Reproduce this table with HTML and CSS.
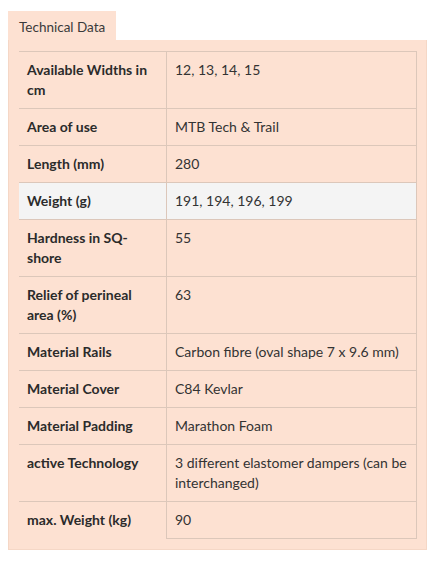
FILE: index.html
```html
<!DOCTYPE html>
<html>
<head>
<meta charset="utf-8">
<link rel="stylesheet" href="styles.css">
</head>
<body>
<div class="wrap">
  <div class="tabs"><div class="tab">Technical Data</div></div>
  <div class="panel">
    <table class="spec">
      <tr><th>Available Widths in cm</th><td>12, 13, 14, 15</td></tr>
      <tr><th>Area of use</th><td>MTB Tech &amp; Trail</td></tr>
      <tr><th>Length (mm)</th><td>280</td></tr>
      <tr class="hl"><th>Weight (g)</th><td>191, 194, 196, 199</td></tr>
      <tr><th>Hardness in SQ-shore</th><td>55</td></tr>
      <tr><th>Relief of perineal area (%)</th><td>63</td></tr>
      <tr><th>Material Rails</th><td>Carbon fibre (oval shape 7 x 9.6 mm)</td></tr>
      <tr><th>Material Cover</th><td>C84 Kevlar</td></tr>
      <tr><th>Material Padding</th><td>Marathon Foam</td></tr>
      <tr><th>active Technology</th><td>3 different elastomer dampers (can be interchanged)</td></tr>
      <tr><th>max. Weight (kg)</th><td>90</td></tr>
    </table>
  </div>
</div>
</body>
</html>
```
FILE: styles.css
```css
html, body { margin: 0; padding: 0; background: #fff; }
body { font-family: Lato, "Open Sans", sans-serif; color: #333; }
.wrap { padding: 11px 12px 0 8px; width: 419px; }
.tabs { display: flex; }
.tab {
  background: #fde1d2;
  font-size: 13.5px;
  line-height: 20px;
  padding: 6px 0 3px 11px;
  width: 97px;
  white-space: nowrap;
  color: #3a3a3a;
}
.panel {
  background: #fde1d2;
  border: 1px solid #f5d7c6;
  border-top: 0;
  padding: 11px 10px 10px 10px;
}
.spec {
  border-collapse: collapse;
  width: 398px;
  font-size: 14px;
  line-height: 20px;
}
.spec th, .spec td {
  text-align: left;
  vertical-align: top;
  padding: 8px 8px 8px 8px;
}
.spec th {
  width: 131px;
  font-weight: bold;
  border-top: 1px solid #dcc7ba;
  color: #2b2b2b;
}
.spec td {
  border: 1px solid #dcc7ba;
  font-weight: normal;
}
.spec .hl th, .spec .hl td { background: #f4f4f4; }
```
